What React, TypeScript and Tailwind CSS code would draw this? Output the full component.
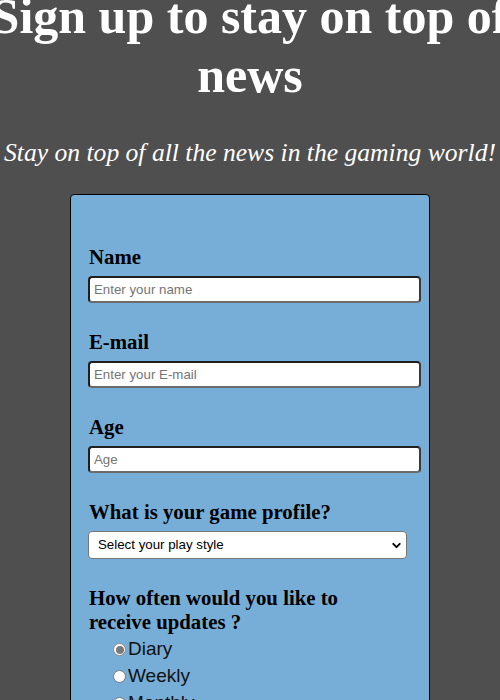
import { ChevronDown } from 'lucide-react';

const serif = "font-['Liberation_Serif','Times_New_Roman',serif]";
const sans = "font-['Liberation_Sans',Arial,sans-serif]";

const Field = ({ label, placeholder }: { label: string; placeholder: string }) => (
  <div className="flex flex-col mb-[27px]">
    <label className={`${serif} text-[20.8px] leading-[24px] font-bold text-black mb-[7px] pl-[1px]`}>
      {label}
    </label>
    <input
      placeholder={placeholder}
      className={`${sans} w-[333px] h-[27px] shrink-0 rounded-[4px] bg-white border-2 border-t-[#1f1f1f] border-l-[#1f1f1f] border-b-[#6b6b6b] border-r-[#3a3a3a] px-[4px] text-[13.3px] text-black placeholder:text-[#757575] outline-none`}
    />
  </div>
);

const Radio = ({ label, checked }: { label: string; checked?: boolean }) => (
  <div className="flex items-center h-[27px] pl-[25px]">
    {checked ? (
      <span className="w-[13px] h-[13px] rounded-full border border-[#8a8a8a] bg-white flex items-center justify-center">
        <span className="w-[8px] h-[8px] rounded-full bg-[#7a7a7a]" />
      </span>
    ) : (
      <span className="w-[13px] h-[13px] rounded-full border border-[#767676] bg-white" />
    )}
    <span className={`${sans} text-[19px] text-[#111] ml-[2px]`}>{label}</span>
  </div>
);

export default function App() {
  return (
    <div className="min-h-[700px] w-[500px] bg-[#4f4f4f] overflow-hidden">
      <h1 className={`${serif} mt-[-13px] flex flex-col items-center text-white font-bold text-[50px] leading-[59px]`}>
        <span className="whitespace-nowrap">Sign up to stay on top of</span>
        <span className="whitespace-nowrap">news</span>
      </h1>
      <p className={`${serif} mt-[33px] text-center italic text-white text-[25.6px] leading-[30px] whitespace-nowrap`}>
        Stay on top of all the news in the gaming world!
      </p>
      <div className="mt-[26px] ml-[70px] w-[360px] min-h-[520px] bg-[#77aed7] border border-black rounded-[4px] pt-[50px] pl-[17px] pr-[21px]">
        <Field label="Name" placeholder="Enter your name" />
        <Field label="E-mail" placeholder="Enter your E-mail" />
        <Field label="Age" placeholder="Age" />
        <div className="flex flex-col mb-[27px]">
          <label className={`${serif} text-[20.8px] leading-[24px] font-bold text-black mb-[7px] pl-[1px]`}>
            What is your game profile?
          </label>
          <div className={`${sans} w-[319px] h-[28px] rounded-[4px] bg-white border border-[#767676] flex items-center justify-between pl-[9px] pr-[3px] text-[13.3px] text-black`}>
            <span>Select your play style</span>
            <ChevronDown size={13} strokeWidth={3.5} className="text-black" />
          </div>
        </div>
        <label className={`${serif} block w-[270px] text-[20.8px] leading-[24px] font-bold text-black pl-[1px] mb-[2px]`}>
          How often would you like to receive updates ?
        </label>
        <Radio label="Diary" checked />
        <Radio label="Weekly" />
        <Radio label="Monthly" />
      </div>
    </div>
  );
}
